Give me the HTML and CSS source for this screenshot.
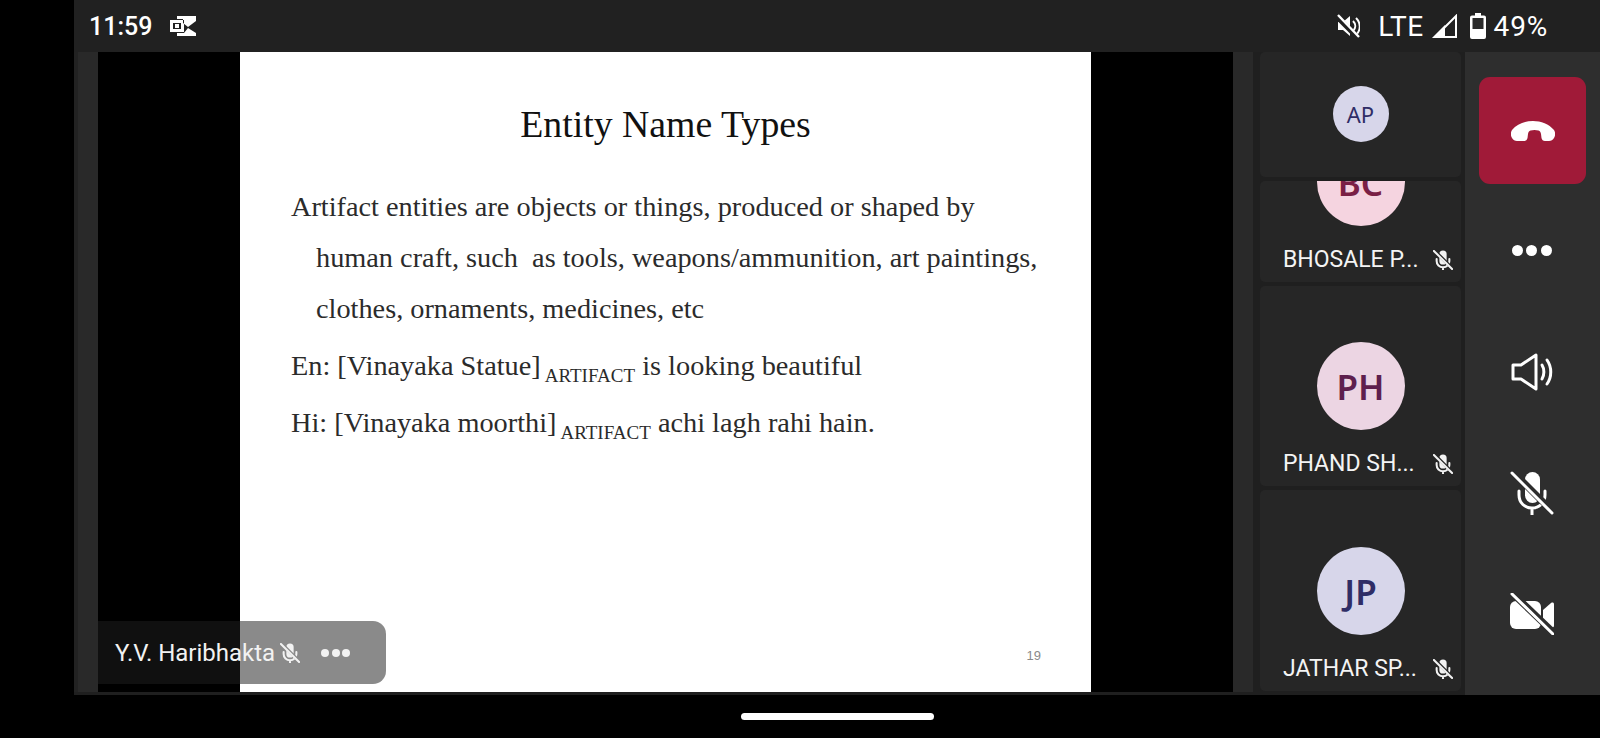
FILE: index.html
```html
<!DOCTYPE html>
<html lang="en">
<head>
    <meta charset="UTF-8">
    <meta name="viewport" content="width=device-width, initial-scale=1.0">
    <title>Meeting</title>
    <link rel="stylesheet" href="styles.css">
</head>
<body>
    <svg class="icon-defs" width="0" height="0">
        <defs>
            <mask id="mic-cut">
                <rect width="44" height="44" fill="#fff"/>
                <path d="M1 -1 L43 41" stroke="#000" stroke-width="7"/>
            </mask>
            <symbol id="mic-off" viewBox="0 0 44 44">
                <g mask="url(#mic-cut)">
                    <rect x="15" y="1" width="15" height="31" rx="7.5" fill="currentColor"/>
                    <path d="M9 20v4c0 8 6 13 13 13s13-5 13-13v-4M22 37v7" fill="none" stroke="currentColor" stroke-width="3" stroke-linecap="round"/>
                </g>
                <path d="M2 2 L42 42" stroke="currentColor" stroke-width="3" stroke-linecap="round"/>
            </symbol>
            <symbol id="mic-off-small" viewBox="0 0 44 44">
                <g mask="url(#mic-cut)">
                    <rect x="14" y="1" width="16" height="31" rx="8" fill="currentColor"/>
                    <path d="M8 20v4c0 8 6 14 14 14s14-6 14-14v-4M22 38v6" fill="none" stroke="currentColor" stroke-width="4.500" stroke-linecap="round"/>
                </g>
                <path d="M2 2 L42 42" stroke="currentColor" stroke-width="4.500" stroke-linecap="round"/>
            </symbol>
        </defs>
    </svg>

    <div class="app">
        <header class="status-bar">
            <span class="clock">11:59</span>
            <svg class="outlook-icon" viewBox="0 0 26 20">
                <path fill-rule="evenodd" fill="#fff" d="M0 4h14v12H0zM3 7v6h8V7zM7 0h19v5l-8 6-5-4V3H7zM14 17l4-5 8 5v3H7v-3z"/>
                <rect x="5" y="8" width="4" height="4" fill="#fff"/>
            </svg>
            <div class="status-right">
                <svg class="mute-icon" viewBox="0 0 24 24">
                    <path fill="#fff" d="M2 8h5l7-6v20l-7-6H2z"/>
                    <path d="M17 7c3 3 3 7 0 10M20 4c5 5 5 12 0 17" fill="none" stroke="#fff" stroke-width="2"/>
                    <path d="M1 3 L21 23" stroke="#212121" stroke-width="5"/>
                    <path d="M2 1 L23 23" stroke="#fff" stroke-width="2.4"/>
                </svg>
                <span class="lte">LTE</span>
                <svg class="signal-icon" viewBox="0 0 25 24">
                    <path fill="#fff" d="M0 24 L13 11 V24z"/>
                    <path d="M3 23 L24 2 V23z" fill="none" stroke="#fff" stroke-width="2"/>
                </svg>
                <svg class="battery-icon" viewBox="0 0 16 26">
                    <path fill="#fff" d="M5 0h6v2.500h3a2 2 0 0 1 2 2V24a2 2 0 0 1-2 2H2a2 2 0 0 1-2-2V4.500a2 2 0 0 1 2-2h3z"/>
                    <rect x="2.500" y="5" width="11" height="11" fill="#2a2a2a"/>
                </svg>
                <span class="battery-level">49%</span>
            </div>
        </header>

        <main class="stage">
            <div class="share">
                <section class="slide">
                    <div class="slide-page">
                        <h1 class="slide-title">Entity Name Types</h1>
                        <p class="slide-text hanging">Artifact entities are objects or things, produced or shaped by<br>human craft, such&nbsp; as tools, weapons/ammunition, art paintings,<br>clothes, ornaments, medicines, etc</p>
                        <p class="slide-text example first">En: [Vinayaka Statue]<sub>ARTIFACT</sub> is looking beautiful</p>
                        <p class="slide-text example">Hi: [Vinayaka moorthi]<sub>ARTIFACT</sub> achi lagh rahi hain.</p>
                        <span class="page-number">19</span>
                    </div>
                </section>
                <div class="presenter">
                    <span class="presenter-name">Y.V. Haribhakta</span>
                    <svg class="mic small"><use href="#mic-off-small"/></svg>
                    <span class="dots small-dots"><i></i><i></i><i></i></span>
                </div>
            </div>

            <aside class="tiles">
                <div class="tile tile-ap">
                    <div class="avatar avatar-small lilac">AP</div>
                </div>
                <div class="tile tile-bc">
                    <div class="avatar pink">BC</div>
                    <div class="tile-label"><span>BHOSALE P...</span><svg class="mic small"><use href="#mic-off-small"/></svg></div>
                </div>
                <div class="tile tile-ph">
                    <div class="avatar mauve">PH</div>
                    <div class="tile-label"><span>PHAND SH...</span><svg class="mic small"><use href="#mic-off-small"/></svg></div>
                </div>
                <div class="tile tile-jp">
                    <div class="avatar lilac">JP</div>
                    <div class="tile-label"><span>JATHAR SP...</span><svg class="mic small"><use href="#mic-off-small"/></svg></div>
                </div>
            </aside>

            <nav class="controls">
                <button class="hangup">
                    <svg viewBox="0 0 44 20" width="44" height="20">
                        <path fill="#fff" d="M1 9C6 3 14 0 22 0s16 3 21 9c1.500 2 1.500 6 0 8-1 2-3 3-5 3h-4c-2 0-3-1-3.500-3l-.5-4c-.3-2-1-3-2.500-3.500-2.500-.7-5.500-.7-8 0C18 10 17.300 11 17 13l-.5 4c-.5 2-1.500 3-3.500 3H6c-2 0-4-1-5-3-1.500-2-1.500-6 0-8z"/>
                    </svg>
                </button>
                <span class="control dots-control"><span class="dots"><i></i><i></i><i></i></span></span>
                <span class="control speaker-control">
                    <svg viewBox="0 0 42 38" width="42" height="38">
                        <path d="M2 12h8L25 2v34L10 26H2z" fill="none" stroke="#fff" stroke-width="3" stroke-linejoin="round"/>
                        <path d="M31 12c2.500 4 2.500 10 0 14M36 7c5 7 5 17 0 24" fill="none" stroke="#fff" stroke-width="3" stroke-linecap="round"/>
                    </svg>
                </span>
                <span class="control mic-control"><svg class="mic large"><use href="#mic-off"/></svg></span>
                <span class="control camera-control">
                    <svg viewBox="0 0 44 42" width="44" height="42">
                        <mask id="cam-cut">
                            <rect width="44" height="42" fill="#fff"/>
                            <path d="M0 -2 L44 40" stroke="#000" stroke-width="7"/>
                        </mask>
                        <g mask="url(#cam-cut)" fill="#fff">
                            <rect x="0" y="8" width="31" height="28" rx="6"/>
                            <path d="M33 17l8-7c1.500-1 3-.5 3 1.500v21c0 2-1.500 2.500-3 1.500l-8-7z"/>
                        </g>
                        <path d="M2 1 L43 41" stroke="#fff" stroke-width="3" stroke-linecap="round"/>
                    </svg>
                </span>
            </nav>
        </main>
    </div>

    <div class="nav-bar"><span class="home-pill"></span></div>
</body>
</html>
```

FILE: styles.css
```css
* {
    box-sizing: border-box;
}

body {
    margin: 0;
    height: 738px;
    overflow: hidden;
    background: #000;
    font-family: Roboto, "Noto Sans", sans-serif;
    color: #fff;
}

.icon-defs {
    position: absolute;
}

.app {
    margin-left: 74px;
    height: 695px;
    background: #1f1f1f;
    display: flex;
    flex-direction: column;
}

.status-bar {
    height: 52px;
    flex-shrink: 0;
    background: #212121;
    display: flex;
    align-items: center;
    padding: 0 52px 0 15px;
}

.clock {
    font-size: 25px;
    font-weight: 500;
}

.outlook-icon {
    width: 26px;
    height: 20px;
    margin-left: 18px;
}

.status-right {
    margin-left: auto;
    display: flex;
    align-items: center;
}

.mute-icon {
    width: 24px;
    height: 24px;
}

.lte {
    margin-left: 18px;
    font-size: 28px;
    letter-spacing: 0.5px;
}

.signal-icon {
    width: 25px;
    height: 24px;
    margin-left: 8px;
}

.battery-icon {
    width: 16px;
    height: 26px;
    margin-left: 13px;
}

.battery-level {
    margin-left: 8px;
    font-size: 28px;
    letter-spacing: 0.8px;
}

.stage {
    flex: 1;
    display: flex;
    min-height: 0;
}

.share {
    position: relative;
    width: 1179px;
    margin-bottom: 3px;
    border-left: 4px solid #222;
    background: #292929;
    padding: 0 20px;
}

.slide {
    height: 100%;
    background: #000;
    padding: 0 142px;
}

.slide-page {
    position: relative;
    height: 100%;
    background: #fff;
}

.slide-title {
    margin: 0;
    padding-top: 50px;
    height: 107px;
    text-align: center;
    font: 400 37.8px/44px "Liberation Serif", serif;
    color: #111;
}

.slide-text {
    margin: 0;
    padding-left: 51px;
    font: 400 28.3px/51px "Liberation Serif", serif;
    color: #2b2b2b;
    white-space: nowrap;
}

.hanging {
    padding-left: 76px;
    text-indent: -25px;
    margin-top: 22px;
}

.example {
    line-height: 57px;
}

.first {
    margin-top: 3px;
}

.slide-text sub {
    margin-left: 4px;
    font-size: 19px;
    line-height: 0;
    vertical-align: -7px;
}

.page-number {
    position: absolute;
    right: 50px;
    bottom: 29px;
    font: 13px "Liberation Sans", sans-serif;
    color: #8a8a8a;
}

.presenter {
    position: absolute;
    left: 20px;
    bottom: 8px;
    width: 288px;
    height: 63px;
    border-radius: 0 13px 13px 0;
    background: rgba(30, 30, 30, 0.52);
    display: flex;
    align-items: center;
    padding-left: 17px;
}

.presenter-name {
    font-size: 24px;
    color: #f2f2f2;
}

.mic {
    display: block;
    color: #f2f2f2;
}

.mic.small {
    width: 20px;
    height: 20px;
    flex-shrink: 0;
}

.mic.large {
    width: 44px;
    height: 44px;
    color: #fff;
}

.presenter .mic {
    margin-left: 5px;
}

.dots {
    display: flex;
    gap: 3.5px;
}

.dots i {
    width: 11px;
    height: 11px;
    border-radius: 50%;
    background: #fff;
}

.small-dots {
    margin-left: 21px;
    gap: 2.5px;
}

.small-dots i {
    width: 8px;
    height: 8px;
    background: #f2f2f2;
}

.tiles {
    width: 212px;
    flex-shrink: 0;
    padding: 0 4px 3px 7px;
    display: flex;
    flex-direction: column;
    gap: 4px;
}

.tile {
    background: #262626;
    border-radius: 5px;
    overflow: hidden;
    display: flex;
    flex-direction: column;
    justify-content: flex-end;
    align-items: center;
    flex-shrink: 0;
}

.tile-ap {
    height: 125px;
    justify-content: center;
    padding-bottom: 1px;
}

.tile-bc {
    height: 101px;
}

.tile-ph {
    height: 200px;
}

.tile-jp {
    height: 201px;
}

.avatar {
    width: 88px;
    height: 88px;
    flex-shrink: 0;
    border-radius: 50%;
    display: flex;
    align-items: center;
    justify-content: center;
    font-family: "Noto Sans", sans-serif;
    font-size: 35px;
    font-weight: 600;
}

.avatar-small {
    width: 56px;
    height: 56px;
    font-size: 22px;
    font-weight: 400;
}

.lilac {
    background: #d7d6ea;
    color: #2f2d66;
}

.pink {
    background: #f5d4e0;
    color: #7a1f45;
}

.mauve {
    background: #ecd5e3;
    color: #5e1f4e;
}

.tile-label {
    width: 100%;
    height: 56px;
    flex-shrink: 0;
    display: flex;
    align-items: center;
    padding: 11px 8px 0 23px;
    font-size: 23px;
    color: #f4f4f4;
}

.tile-label span {
    flex: 1;
    white-space: nowrap;
}

.controls {
    flex: 1;
    background: #2e2e2e;
    display: flex;
    flex-direction: column;
    align-items: center;
    padding-top: 25px;
}

.hangup {
    width: 107px;
    height: 107px;
    flex-shrink: 0;
    border: 0;
    padding: 0;
    margin-bottom: 6px;
    border-radius: 11px;
    background: #a01a38;
    display: flex;
    align-items: center;
    justify-content: center;
}

.control {
    height: 121px;
    flex-shrink: 0;
    padding-right: 2px;
    display: flex;
    align-items: center;
    justify-content: center;
}

.nav-bar {
    margin-left: 74px;
    height: 43px;
    display: flex;
    justify-content: center;
    padding-top: 18px;
}

.home-pill {
    width: 193px;
    height: 7px;
    border-radius: 4px;
    background: #fff;
}
```
